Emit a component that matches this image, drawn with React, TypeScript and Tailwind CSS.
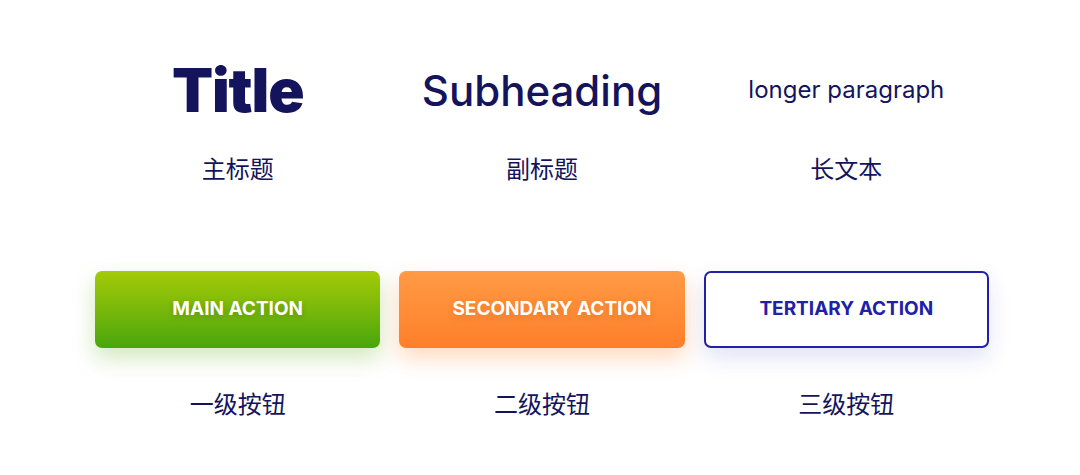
const columns = [
  {
    heading: "Title",
    headingClass: "text-[60px] font-black tracking-[-0.02em]",
    label: "主标题",
    action: "MAIN ACTION",
    actionClass:
      "bg-gradient-to-b from-[#a4ca07] to-[#47a60c] text-white shadow-[0_10px_22px_rgba(95,170,20,0.28)] [text-shadow:0_2px_6px_rgba(0,0,0,0.18)]",
    actionLabel: "一级按钮",
  },
  {
    heading: "Subheading",
    headingClass: "text-[42px] font-medium",
    label: "副标题",
    action: "SECONDARY ACTION",
    actionClass:
      "bg-gradient-to-b from-[#ff9a45] to-[#ff7f29] pl-[20px] text-white shadow-[0_10px_22px_rgba(255,130,40,0.3)] [text-shadow:0_2px_6px_rgba(180,70,0,0.25)]",
    actionLabel: "二级按钮",
  },
  {
    heading: "longer paragraph",
    headingClass: "text-[24px] font-normal",
    label: "长文本",
    action: "TERTIARY ACTION",
    actionClass:
      "border-2 border-[#2020aa] bg-white text-[#2020aa] shadow-[0_10px_22px_rgba(60,60,200,0.15)]",
    actionLabel: "三级按钮",
  },
];

export default function App() {
  return (
    <div className="h-[475px] w-[1080px] bg-white text-[#14145c] [font-family:Inter,'Noto_Sans_CJK_SC',sans-serif]">
      <div className="ml-[95px] grid w-[894px] grid-cols-3 gap-x-[19px] pt-[50px]">
        {columns.map((c) => (
          <div key={c.label} className="flex flex-col items-center">
            <div className="flex h-[80px] items-center">
              <span className={c.headingClass}>{c.heading}</span>
            </div>
            <div className="mt-[24px] flex h-[28px] items-center text-[24px] leading-none [font-family:'Noto_Sans_CJK_SC',sans-serif]">
              {c.label}
            </div>
            <button
              className={`mt-[89px] flex h-[77px] w-full items-center justify-center rounded-[7px] text-[19px] font-bold ${c.actionClass}`}
            >
              {c.action}
            </button>
            <div className="mt-[41px] flex h-[28px] items-center text-[24px] leading-none [font-family:'Noto_Sans_CJK_SC',sans-serif]">
              {c.actionLabel}
            </div>
          </div>
        ))}
      </div>
    </div>
  );
}
